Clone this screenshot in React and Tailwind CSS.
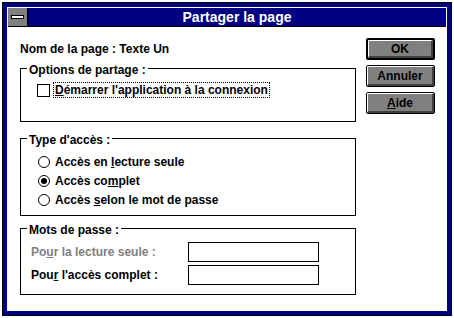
function Group({ label, className, children }) {
  return (
    <div className={`relative border border-black ${className}`}>
      <span className="absolute -top-[5px] left-[6px] bg-white px-[2px] leading-[12px]">{label}</span>
      {children}
    </div>
  );
}

function Radio({ checked }) {
  return (
    <svg width="12" height="12" viewBox="0 0 12 12" className="shrink-0">
      <circle cx="6" cy="6" r="5.5" fill="white" stroke="black" strokeWidth="1" />
      {checked && <circle cx="6" cy="6" r="3" fill="black" />}
    </svg>
  );
}

function Btn({ children, def }) {
  return (
    <div className={`w-[69px] h-[22px] rounded-[2px] border-black ${def ? "border-2" : "border"} bg-[#808080]`}>
      <div className="h-full border-t border-l border-white border-r-2 border-b-2 border-r-[#404040] border-b-[#404040] flex items-center justify-center leading-[14px]">
        {children}
      </div>
    </div>
  );
}

export default function App() {
  return (
    <div className="w-[454px] h-[318px] bg-white pt-[2px] pl-[2px] font-['Liberation_Sans',Arial,sans-serif] font-bold text-[12px] text-black">
      <div className="w-[450px] h-[314px] border border-black bg-[#000080] p-[4px]">
        <div className="h-full border border-white bg-white flex flex-col">
          {/* title bar */}
          <div className="h-[19px] flex border-b border-black bg-[#000080]">
            <div className="w-[20px] border-r border-black bg-[#808080] flex items-center justify-center pr-[1px]">
              <div className="w-[13px] h-[4px] border border-black bg-white" />
            </div>
            <div className="flex-1 text-white text-[14px] leading-[18px] text-center">Partager la page</div>
          </div>

          <div className="flex flex-1 pl-[12px]">
            {/* left column */}
            <div className="w-[336px] flex flex-col">
              <div className="mt-[15px] leading-[14px]">Nom de la page : Texte Un</div>

              <Group label="Options de partage :" className="mt-[12px] h-[54px] pt-[13px] pl-[16px]">
                <div className="flex items-center h-[16px]">
                  <div className="w-[13px] h-[13px] border border-black bg-white" />
                  <span className="ml-[3px] border border-dotted border-black px-[1px] leading-[14px]">
                    <u>D</u>émarrer l'application à la connexion
                  </span>
                </div>
              </Group>

              <Group label="Type d'accès :" className="mt-[16px] h-[78px] pt-[16px] pl-[17px]">
                <div className="flex flex-col gap-[5px]">
                  <div className="flex items-center gap-[5px] h-[14px]">
                    <Radio />
                    <span className="leading-[14px]">Accès en <u>l</u>ecture seule</span>
                  </div>
                  <div className="flex items-center gap-[5px] h-[14px]">
                    <Radio checked />
                    <span className="leading-[14px]">Accès co<u>m</u>plet</span>
                  </div>
                  <div className="flex items-center gap-[5px] h-[14px]">
                    <Radio />
                    <span className="leading-[14px]">Accès <u>s</u>elon le mot de passe</span>
                  </div>
                </div>
              </Group>

              <Group label="Mots de passe :" className="mt-[12px] h-[67px] pt-[13px] pl-[10px]">
                <div className="flex flex-col gap-[3px]">
                  <div className="flex items-center h-[20px]">
                    <span className="w-[157px] text-[#808080] leading-[14px]">Po<u>u</u>r la lecture seule :</span>
                    <div className="w-[131px] h-[20px] border border-black bg-white" />
                  </div>
                  <div className="flex items-center h-[20px]">
                    <span className="w-[157px] leading-[14px]">Pou<u>r</u> l'accès complet :</span>
                    <div className="w-[131px] h-[20px] border border-black bg-white" />
                  </div>
                </div>
              </Group>
            </div>

            {/* buttons */}
            <div className="ml-[10px] pt-[11px] flex flex-col gap-[5px]">
              <Btn def>OK</Btn>
              <Btn>Annuler</Btn>
              <Btn><u>A</u>ide</Btn>
            </div>
          </div>
        </div>
      </div>
    </div>
  );
}
